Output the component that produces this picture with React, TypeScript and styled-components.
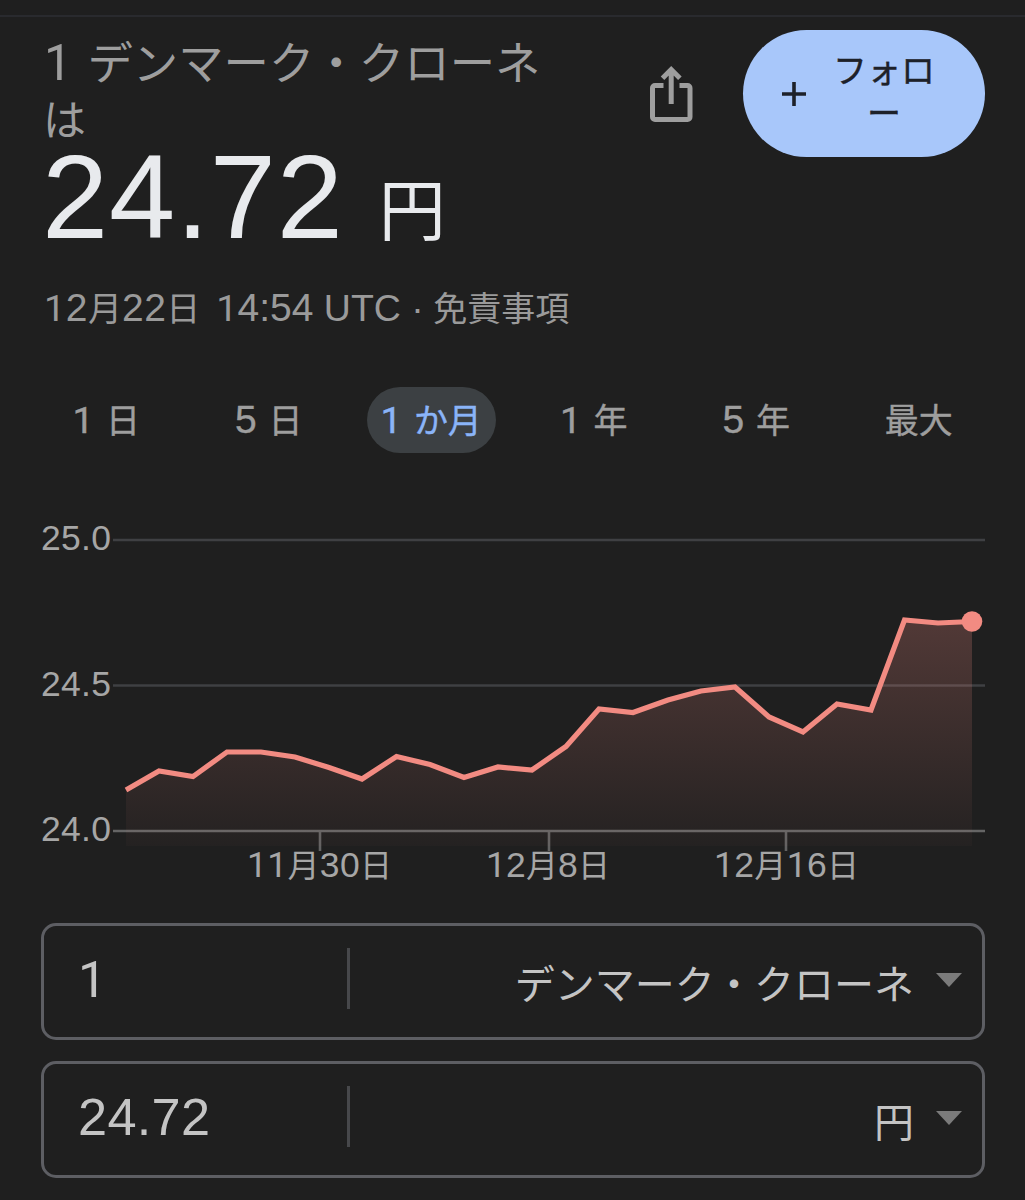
import React from "react";
import styled, { createGlobalStyle } from "styled-components";

const GlobalStyle = createGlobalStyle`
  * { box-sizing: border-box; }
  body {
    margin: 0;
    background: #1f1f1f;
    font-family: "Liberation Sans", "Noto Sans CJK JP", sans-serif;
  }
`;

const Page = styled.main`
  width: 1025px;
  height: 1200px;
  overflow: hidden;
  display: flex;
  flex-direction: column;
  background: #1f1f1f;
`;

const TopRule = styled.div`
  height: 2px;
  margin-top: 15px;
  flex: none;
  background: #292a2e;
`;

const Header = styled.header`
  display: flex;
  height: 245px;
  padding: 13px 40px 0 44px;
  flex: none;
`;

const Summary = styled.div`
  width: 606px;
  display: flex;
  flex-direction: column;
`;

const Title = styled.div`
  display: flex;
  flex-direction: column;
  height: 114px;
  margin-top: 7px;
  color: #9e9e9e;
  line-height: 56px;
  white-space: pre;
`;

const TitleLine = styled.span<{ $indent?: number; $size?: number }>`
  height: 56px;
  margin-left: ${(p) => p.$indent ?? 0}px;
  font-size: ${(p) => p.$size ?? 45.4}px;
`;

const Latin = styled.span<{ $size: number; $gap?: number; $lead?: number; $spacing?: number }>`
  font-size: ${(p) => p.$size}px;
  margin-right: ${(p) => p.$gap ?? 0}px;
  margin-left: ${(p) => p.$lead ?? 0}px;
  letter-spacing: ${(p) => p.$spacing ?? 0}px;
  line-height: 1;
`;

/* Roboto's "1" has no foot, unlike the one of Liberation Sans. */
const One = styled.span`
  font-family: Roboto, sans-serif;
  font-size: 0.97em;
`;

const Rate = styled.div`
  display: flex;
  align-items: flex-start;
  gap: 34px;
  height: 90px;
  color: #e8eaed;
`;

const RateValue = styled.span`
  margin-left: -2px;
  font-size: 119px;
  line-height: 92px;
  letter-spacing: 0.8px;
`;

const RateUnit = styled.span`
  margin-top: 15px;
  margin-left: 1px;
  font-size: 67px;
  line-height: 92px;
`;

const ShareButton = styled.button`
  width: 44px;
  height: 58px;
  margin-top: 35px;
  margin-left: -1px;
  padding: 0;
  border: 0;
  background: none;
`;

const FollowButton = styled.button`
  display: flex;
  align-items: center;
  width: 242px;
  height: 127px;
  margin-left: auto;
  padding: 0 38px;
  border: 0;
  border-radius: 64px;
  background: #a8c7fa;
  color: #1d2129;
  font-family: inherit;
`;

const FollowLabel = styled.span`
  width: 102px;
  margin-left: 26px;
  padding-bottom: 1px;
  font-size: 34px;
  line-height: 43px;
  text-align: center;
  -webkit-text-stroke: 0.4px currentColor;
`;

const Meta = styled.div`
  flex: none;
  height: 50px;
  margin-top: 22px;
  padding-left: 44px;
  color: #9a9a9a;
  font-size: 34px;
  line-height: 50px;
  white-space: pre;
`;

const Tabs = styled.nav`
  display: grid;
  grid-template-columns: repeat(6, 162.5px);
  justify-content: center;
  justify-items: center;
  flex: none;
  height: 66px;
  margin-top: 53px;
`;

const Tab = styled.button<{ $active?: boolean }>`
  height: 66px;
  padding: 1px 14px 0;
  border: 0;
  border-radius: 33px;
  background: ${(p) => (p.$active ? "#3c4043" : "transparent")};
  color: ${(p) => (p.$active ? "#8ab4f8" : "#9e9e9e")};
  font-family: inherit;
  font-size: 34px;
  line-height: 66px;
  white-space: pre;
  -webkit-text-stroke: 0.4px currentColor;
`;

const Chart = styled.svg`
  display: block;
  flex: none;
  width: 1025px;
  height: 400px;
  margin-top: 47px;
`;

const AxisLabel = styled.text`
  fill: #a6a6a6;
  font-size: 35.5px;
`;

const SvgOne = styled.tspan`
  font-family: Roboto, sans-serif;
`;

const Kanji = styled.tspan`
  font-size: 32px;
`;

const Converter = styled.section`
  display: flex;
  flex-direction: column;
  gap: 21px;
  margin-top: 23px;
  padding: 0 40px 0 41px;
`;

const Field = styled.div`
  display: flex;
  align-items: center;
  height: 117px;
  border: 3px solid #5d5e63;
  border-radius: 15px;
`;

const Amount = styled.div`
  width: 303px;
  height: 62px;
  padding-left: 34px;
  color: #c4c4c4;
  font-size: 52.3px;
  line-height: 56px;
  letter-spacing: 0.3px;
`;

const Divider = styled.div`
  width: 3px;
  height: 61px;
  margin-top: -6px;
  background: #47484b;
`;

const Currency = styled.div`
  flex: 1;
  padding-top: 6px;
  color: #c4c4c4;
  font-size: 40px;
  line-height: 60px;
  text-align: right;
`;

const Caret = styled.svg`
  width: 26px;
  height: 14px;
  margin: -3px 20px 0 22px;
`;

const values: [number, number][] = [
  [126, 790], [159, 771], [193, 776.5], [227, 752], [261, 752], [295, 757],
  [329, 767.5], [362, 779], [396.5, 756.5], [430, 764.5], [464, 777.5],
  [498, 767], [532, 770], [566, 746.5], [599, 709], [633, 712.5],
  [668, 700], [701, 691], [735, 687], [769, 717], [803, 732],
  [837, 704], [871, 710], [904.5, 620], [938, 623], [972, 621.5],
];

const line = values.map(([x, y]) => `${x},${y}`).join(" ");

const gridLines = [
  { label: "25.0", y: 540 },
  { label: "24.5", y: 685.5 },
  { label: "24.0", y: 831 },
];

const ticks = [
  { x: 320, start: 247, width: 145, month: "11", day: "30" },
  { x: 549, start: 486, width: 124, month: "12", day: "8" },
  { x: 786, start: 714, width: 145, month: "12", day: "16" },
];

function Digits({ text, svg }: { text: string; svg?: boolean }) {
  const Tag = svg ? SvgOne : One;
  return (
    <>
      {text.split(/(1+)/).filter(Boolean).map((part, i) =>
        part[0] === "1" ? <Tag key={i}>{part}</Tag> : part
      )}
    </>
  );
}

function RateChart() {
  return (
    <Chart viewBox="0 500 1025 400">
      <defs>
        <linearGradient id="area" gradientUnits="userSpaceOnUse" x1="0" y1="620" x2="0" y2="846">
          <stop offset="0" stopColor="#f28b82" stopOpacity="0.24" />
          <stop offset="1" stopColor="#f28b82" stopOpacity="0.025" />
        </linearGradient>
      </defs>
      {gridLines.map((g, i) => (
        <g key={g.label}>
          <line x1="113" x2="985" y1={g.y} y2={g.y} stroke={i === 2 ? "#656565" : "#3f4043"} strokeWidth="2.6" />
          <AxisLabel x="41" y={g.y + 10} textLength="70">{g.label}</AxisLabel>
        </g>
      ))}
      {ticks.map((t) => (
        <g key={t.x}>
          <line x1={t.x} x2={t.x} y1="832" y2="851" stroke="#626262" strokeWidth="2.6" />
          <AxisLabel x={t.start} y="877" textLength={t.width}>
            <Digits svg text={t.month} /><Kanji>月</Kanji><Digits svg text={t.day} /><Kanji>日</Kanji>
          </AxisLabel>
        </g>
      ))}
      <polygon points={`126,846 ${line} 972,846`} fill="url(#area)" />
      <polyline points={line} fill="none" stroke="#f28b82" strokeWidth="5.2" />
      <circle cx="972" cy="621.5" r="10.3" fill="#f28b82" />
    </Chart>
  );
}

const periods = [
  { n: "1", unit: "日" },
  { n: "5", unit: "日" },
  { n: "1", unit: "か月", active: true },
  { n: "1", unit: "年" },
  { n: "5", unit: "年" },
  { n: "", unit: "最大" },
];

const fields = [
  { amount: "1", currency: "デンマーク・クローネ" },
  { amount: "24.72", currency: "円" },
];

export default function App() {
  return (
    <Page>
      <GlobalStyle />
      <TopRule />
      <Header>
        <Summary>
          <Title>
            <TitleLine>
              <Latin $size={51} $gap={3}><Digits text="1" /></Latin> デンマーク・クローネ
            </TitleLine>
            <TitleLine $indent={-1} $size={43}>は</TitleLine>
          </Title>
          <Rate>
            <RateValue>24.72</RateValue>
            <RateUnit>円</RateUnit>
          </Rate>
        </Summary>
        <ShareButton aria-label="共有">
          <svg width="44" height="58" viewBox="0 0 44 58" fill="none" stroke="#9e9e9e" strokeWidth="5">
            <path d="M14.500 20.500H6a2.500 2.500 0 0 0-2.500 2.500v29A2.500 2.500 0 0 0 6 54.500h32.500a2.500 2.500 0 0 0 2.500-2.500V23a2.500 2.500 0 0 0-2.500-2.500h-8" />
            <path d="M22.200 39V5M13.500 13.300l8.700-8.700 8.700 8.700" />
          </svg>
        </ShareButton>
        <FollowButton>
          <svg width="26" height="26" viewBox="0 0 26 26" stroke="#1d2129" strokeWidth="3.600">
            <path d="M13 1v24M1 13h24" />
          </svg>
          <FollowLabel>フォロー</FollowLabel>
        </FollowButton>
      </Header>
      <Meta>
        <Latin $size={39} $spacing={0.5}><Digits text="12" /></Latin>月<Latin $size={39} $spacing={0.5}>22</Latin>日
        <Latin $size={39} $lead={5}> <Digits text="14:54" /></Latin>
        <Latin $size={37.5} $gap={-1}> UTC · </Latin>免責事項
      </Meta>
      <Tabs>
        {periods.map((p) => (
          <Tab key={p.n + p.unit} $active={p.active}>
            {p.n && <Latin $size={39} $gap={12}><Digits text={p.n} /></Latin>}{p.unit}
          </Tab>
        ))}
      </Tabs>
      <RateChart />
      <Converter>
        {fields.map((f) => (
          <Field key={f.currency}>
            <Amount><Digits text={f.amount} /></Amount>
            <Divider />
            <Currency>{f.currency}</Currency>
            <Caret viewBox="0 0 26 14"><path d="M0 0h26L13 14z" fill="#7b7b7b" /></Caret>
          </Field>
        ))}
      </Converter>
    </Page>
  );
}
